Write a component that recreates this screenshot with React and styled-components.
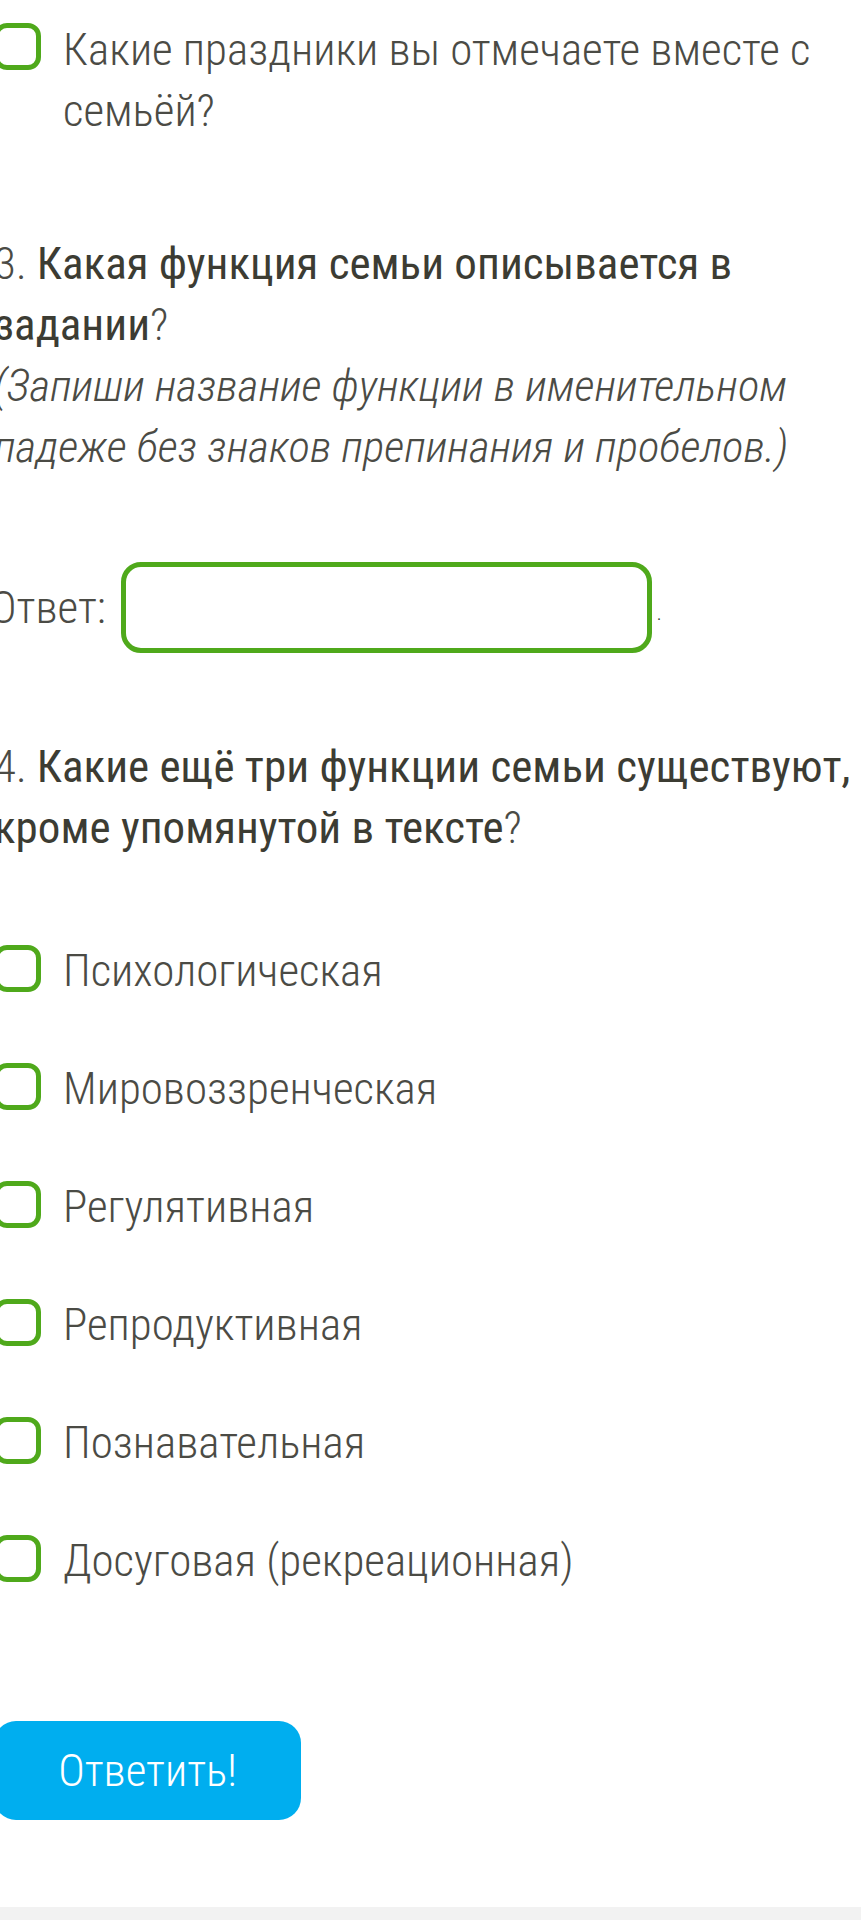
import React from 'react'
import styled, { createGlobalStyle } from 'styled-components';

const GlobalStyle = createGlobalStyle`
  html, body {
    margin: 0;
    padding: 0;
    background: #ffffff;
    overflow-x: hidden;
  }
  body {
    font-family: "Roboto Condensed", Roboto, "Noto Sans", sans-serif;
    font-weight: 300;
    color: #4b4b45;
  }
`;

const Page = styled.main`
  margin-left: -6px;
  padding-top: 19px;
  font-size: 45px;
  line-height: 61px;
`;

const Option = styled.label`
  display: flex;
  align-items: flex-start;
  gap: 22px;
  margin-bottom: ${p => p.$gap || 0}px;
  cursor: pointer;
`;

const Box = styled.span`
  flex: none;
  box-sizing: border-box;
  width: 47px;
  height: 47px;
  margin-top: ${p => p.$top || 5}px;
  border: 5px solid #4fa91b;
  border-radius: 13px;
  background: #fff;
`;

const OptionText = styled.span`
  flex: 1;
`;

const Question = styled.div`
  margin-top: ${p => p.$top}px;
  padding-right: 4px;
`;

const Strong = styled.span`
  font-weight: 400;
  color: #3c3c33;
`;

const Hint = styled.div`
  font-style: italic;
`;

const AnswerRow = styled.div`
  display: flex;
  align-items: center;
  margin-top: 85px;
  margin-left: -4px;
`;

const AnswerLabel = styled.span`
  margin-right: 15px;
`;

const AnswerInput = styled.input`
  box-sizing: border-box;
  width: 531px;
  height: 91px;
  border: 5px solid #4fa91b;
  border-radius: 20px;
  background: #fff;
  outline: none;
  padding: 0 16px;
  font: inherit;
`;

const Dot = styled.span`
  font-size: 20px;
  align-self: flex-end;
  line-height: 1;
  margin: 0 0 30px 5px;
  color: #333;
`;

const Options = styled.div`
  margin-top: 82px;
`;

const SubmitButton = styled.button`
  display: block;
  margin-top: 130px;
  width: 307px;
  height: 99px;
  border: none;
  border-radius: 22px;
  background: #00aeef;
  color: #ffffff;
  font-family: inherit;
  font-weight: 300;
  font-size: 45px;
  cursor: pointer;
`;

const Footer = styled.div`
  margin-top: 87px;
  height: 40px;
  background: #f2f2f2;
`;

const functions = [
  'Психологическая',
  'Мировоззренческая',
  'Регулятивная',
  'Репродуктивная',
  'Познавательная',
  'Досуговая (рекреационная)',
];

export default function App() {
  return (
    <React.Fragment>
      <GlobalStyle />
      <Page>
        <Option>
          <Box $top={4} />
          <OptionText>Какие праздники вы отмечаете вместе с семьёй?</OptionText>
        </Option>

        <Question $top={92}>
          3. <Strong>Какая функция семьи описывается в задании</Strong>?
          <Hint>(Запиши название функции в именительном падеже без знаков препинания и пробелов.)</Hint>
        </Question>

        <AnswerRow>
          <AnswerLabel>Ответ:</AnswerLabel>
          <AnswerInput type="text" />
          <Dot>.</Dot>
        </AnswerRow>

        <Question $top={83}>
          4. <Strong>Какие ещё три функции семьи существуют, кроме упомянутой в тексте</Strong>?
        </Question>

        <Options>
          {functions.map((name, i) => (
            <Option key={i} $gap={i === functions.length - 1 ? 0 : 57}>
              <Box />
              <OptionText>{name}</OptionText>
            </Option>
          ))}
        </Options>

        <SubmitButton>Ответить!</SubmitButton>
      </Page>
      <Footer />
    </React.Fragment>
  );
}
